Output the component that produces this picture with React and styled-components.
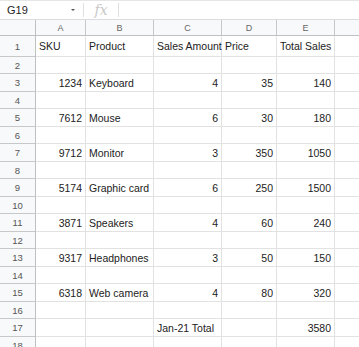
import React from 'react'
import styled, { createGlobalStyle } from 'styled-components'

const GlobalStyle = createGlobalStyle`
  html, body {
    margin: 0;
    padding: 0;
    background: #ffffff;
    overflow: hidden;
  }
  body {
    font-family: "Liberation Sans", Arial, sans-serif;
  }
`;

const Container = styled.div`
  width: 359px;
  height: 347px;
  overflow: hidden;
  background: #fff;
`;

const FormulaBar = styled.div`
  height: 20px;
  box-sizing: border-box;
  border-top: 1px solid #e6e6e6;
  border-bottom: 1px solid #dadce0;
  display: flex;
  align-items: center;
`;

const NameBox = styled.div`
  width: 83px;
  box-sizing: border-box;
  padding: 0 8px 0 7px;
  display: flex;
  align-items: center;
  justify-content: space-between;
  font-size: 11px;
  color: #222;
`;

const Caret = styled.span`
  width: 0;
  height: 0;
  border-left: 2px solid transparent;
  border-right: 2px solid transparent;
  border-top: 2px solid #555;
`;

const Divider = styled.div`
  width: 1px;
  height: 14px;
  background: #e0e0e0;
`;

const Fx = styled.div`
  width: 34px;
  text-align: center;
  font-family: "DejaVu Serif", "Liberation Serif", serif;
  font-style: italic;
  font-size: 14px;
  color: #c8c8c8;
  line-height: 14px;
`;

const Sheet = styled.div`
  display: grid;
  grid-template-columns: 36px 50px 68px 68px 55px 58px 40px;
`;

const Corner = styled.div`
  height: 16px;
  box-sizing: border-box;
  background: #f8f9fa;
  border-right: 1px solid #c0c0c0;
  border-bottom: 1px solid #c0c0c0;
`;

const ColHead = styled.div`
  height: 16px;
  box-sizing: border-box;
  background: #f8f9fa;
  border-right: 1px solid #c8c8c8;
  border-bottom: 1px solid #c0c0c0;
  font-size: 9px;
  color: #666;
  display: flex;
  align-items: center;
  justify-content: center;
`;

const RowHead = styled.div`
  height: ${(p) => p.h}px;
  box-sizing: border-box;
  background: #f8f9fa;
  border-right: 1px solid #c0c0c0;
  border-bottom: 1px solid #c8c8c8;
  font-size: 9.5px;
  color: #555;
  display: flex;
  align-items: center;
  justify-content: center;
`;

const Cell = styled.div`
  height: ${(p) => p.h}px;
  box-sizing: border-box;
  border-right: 1px solid #e2e2e2;
  border-bottom: 1px solid #e2e2e2;
  padding: 0 3px;
  font-size: 10.5px;
  color: #222;
  white-space: nowrap;
  overflow: visible;
  display: flex;
  align-items: center;
  justify-content: ${(p) => (p.num ? 'flex-end' : 'flex-start')};
  position: relative;
  z-index: ${(p) => (p.over ? 1 : 0)};
`;

const columns = ['A', 'B', 'C', 'D', 'E', '']

const data = [
  ['SKU', 'Product', 'Sales Amount', 'Price', 'Total Sales'],
  [],
  [1234, 'Keyboard', 4, 35, 140],
  [],
  [7612, 'Mouse', 6, 30, 180],
  [],
  [9712, 'Monitor', 3, 350, 1050],
  [],
  [5174, 'Graphic card', 6, 250, 1500],
  [],
  [3871, 'Speakers', 4, 60, 240],
  [],
  [9317, 'Headphones', 3, 50, 150],
  [],
  [6318, 'Web camera', 4, 80, 320],
  [],
  ['', '', 'Jan-21 Total', '', 3580],
  [],
]

const rowHeight = (i) => (i === 0 ? 21 : i % 2 === 1 ? 17 : 18)

const App = () => {
  return (
    <Container>
      <GlobalStyle />
      <FormulaBar>
        <NameBox>
          <span>G19</span>
          <Caret />
        </NameBox>
        <Divider />
        <Fx>fx</Fx>
        <Divider />
      </FormulaBar>
      <Sheet>
        <Corner />
        {columns.map((c, i) => (
          <ColHead key={i}>{c}</ColHead>
        ))}
        {data.map((row, r) => {
          const h = rowHeight(r)
          return (
            <React.Fragment key={r}>
              <RowHead h={h}>{r + 1}</RowHead>
              {columns.map((_, c) => {
                const v = row[c]
                return (
                  <Cell key={c} h={h} num={typeof v === 'number'} over={c === 2}>
                    {v}
                  </Cell>
                )
              })}
            </React.Fragment>
          )
        })}
      </Sheet>
    </Container>
  )
}

export default App
